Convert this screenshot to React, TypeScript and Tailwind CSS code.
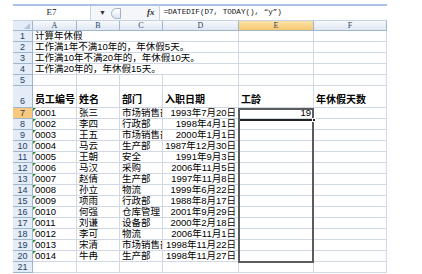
import React from "react";

const cols = ["A", "B", "C", "D", "E", "F"];
const colW = ["w-[44px]", "w-[43px]", "w-[43px]", "w-[76px]", "w-[75px]", "w-[73px]"];

const staff = [
  ["0001", "张三", "市场销售部", "1993年7月20日", "19"],
  ["0002", "李四", "行政部", "1998年4月1日", ""],
  ["0003", "王五", "市场销售部", "2000年1月1日", ""],
  ["0004", "马云", "生产部", "1987年12月30日", ""],
  ["0005", "王朝", "安全", "1991年9月3日", ""],
  ["0006", "马汉", "采购", "2006年11月5日", ""],
  ["0007", "赵倩", "生产部", "1997年11月8日", ""],
  ["0008", "孙立", "物流", "1999年6月22日", ""],
  ["0009", "项雨", "行政部", "1988年8月17日", ""],
  ["0010", "何强", "仓库管理", "2001年9月29日", ""],
  ["0011", "刘谦", "设备部", "2000年2月18日", ""],
  ["0012", "李可", "物流", "2006年11月1日", ""],
  ["0013", "宋清", "市场销售部", "1998年11月22日", ""],
  ["0014", "牛冉", "生产部", "1998年11月27日", ""],
];

const notes = [
  "计算年休假",
  "工作满1年不满10年的，年休假5天。",
  "工作满10年不满20年的，年休假10天。",
  "工作满20年的，年休假15天。",
];

function RowHead({ n, active, tall }: { n: number; active?: boolean; tall?: boolean }) {
  return (
    <div
      className={`flex w-[20px] shrink-0 justify-center border-r border-b border-[#9eb6ce] text-[9px] leading-[10px] text-[#27415f] ${
        tall ? "h-[22px] items-end pb-[1px]" : "h-[11px] items-center"
      } ${active ? "bg-[#f8c97c]" : "bg-[#e4ecf7]"}`}
    >
      {n}
    </div>
  );
}

function Cell({ w, children, className = "", tall }: { w: string; children?: React.ReactNode; className?: string; tall?: boolean }) {
  return (
    <div
      className={`relative flex shrink-0 overflow-hidden whitespace-nowrap border-r border-b border-[#d0d7e5] px-[2px] leading-[10px] text-black ${w} ${
        tall ? "h-[22px] items-end pb-[2px] text-[10px]" : "h-[11px] items-center text-[9.5px]"
      } ${className}`}
    >
      {children}
    </div>
  );
}

export default function App() {
  return (
    <div
      className="h-[274px] w-[422px] overflow-hidden bg-white pl-[13px]"
      style={{ fontFamily: '"Liberation Sans", "Noto Sans CJK SC", sans-serif' }}
    >
      <div className="w-[374px]">
        <div className="mt-[4px] h-[2px] bg-[#a9c4e6]" />
        {/* formula bar */}
        <div className="flex h-[15px] items-center border-b border-[#c5d2e3] bg-[#f4f6f9]">
          <div className="flex h-full w-[78px] items-center justify-center border-r border-[#c5d2e3] bg-white font-['Liberation_Serif'] text-[9px] text-[#222]">
            E7
          </div>
          <span className="ml-[8px] text-[7px] text-[#333]">▼</span>
          <div className="ml-[5px] h-[11px] w-[10px] rounded-l-full border border-[#9fb2c8] bg-gradient-to-b from-white to-[#dfe6ef]" />
          <span className="ml-[26px] font-['Liberation_Serif'] text-[9px] font-bold italic text-[#333]">fx</span>
          <div className="ml-[5px] flex h-full flex-1 items-center border-l border-[#c5d2e3] bg-white pl-[3px] font-['Liberation_Mono'] text-[7.6px] text-[#111]">
            =DATEDIF(D7, TODAY(), “y”)
          </div>
        </div>

        <div className="relative">
          {/* column headers */}
          <div className="flex h-[10px]">
            <div className="relative w-[20px] shrink-0 border-r border-b border-[#9eb6ce] bg-[#e4ecf7]">
              <div className="absolute right-[2px] bottom-[1px] h-0 w-0 border-b-[6px] border-l-[6px] border-b-[#b4c4d8] border-l-transparent" />
            </div>
            {cols.map((c, i) => (
              <div
                key={c}
                className={`flex shrink-0 items-center justify-center border-r border-b border-[#9eb6ce] font-['Liberation_Serif'] text-[8px] leading-[9px] text-[#27415f] ${colW[i]} ${
                  c === "E" ? "bg-gradient-to-b from-[#fbe3a7] to-[#f6c86f]" : "bg-gradient-to-b from-[#f7f9fc] to-[#dfe7f2]"
                }`}
              >
                {c}
              </div>
            ))}
          </div>

          {/* rows 1-5 */}
          {[1, 2, 3, 4, 5].map((n) => (
            <div key={n} className="flex">
              <RowHead n={n} />
              <Cell w={colW[0]} className="overflow-visible">
                <span className="relative z-10">{notes[n - 1] ?? ""}</span>
              </Cell>
              {colW.slice(1).map((w, i) => (
                <Cell key={i} w={w} className={notes[n - 1] && i < 2 ? "border-r-0" : ""} />
              ))}
            </div>
          ))}

          {/* row 6 header */}
          <div className="flex">
            <RowHead n={6} tall />
            {["员工编号", "姓名", "部门", "入职日期", "工龄", "年休假天数"].map((t, i) => (
              <Cell key={t} w={colW[i]} tall className="font-bold">
                {t}
              </Cell>
            ))}
          </div>

          {/* data rows */}
          {staff.map((r, idx) => (
            <div key={r[0]} className="flex">
              <RowHead n={idx + 7} active={idx === 0} />
              <Cell w={colW[0]}>
                <div className="absolute top-0 left-0 h-0 w-0 border-t-[3px] border-r-[3px] border-t-[#2e8b2e] border-r-transparent" />
                {r[0]}
              </Cell>
              <Cell w={colW[1]}>{r[1]}</Cell>
              <Cell w={colW[2]}>{r[2]}</Cell>
              <Cell w={colW[3]} className="justify-end">{r[3]}</Cell>
              <Cell w={colW[4]} className="justify-end">{r[4]}</Cell>
              <Cell w={colW[5]} />
            </div>
          ))}

          {/* row 21 */}
          <div className="flex">
            <RowHead n={21} />
            {colW.map((w, i) => (
              <Cell key={i} w={w} />
            ))}
          </div>

          {/* selection E7:E20 */}
          <div className="pointer-events-none absolute top-[87px] left-[225px] h-[155px] w-[76px] border-2 border-[#5c5c5c]">
            <div className="absolute top-[9px] right-0 left-0 h-[2px] bg-[#222]" />
            <div className="absolute top-[8px] right-[-4px] h-[4px] w-[4px] border border-white bg-[#222]" />
          </div>
        </div>
      </div>
    </div>
  );
}
